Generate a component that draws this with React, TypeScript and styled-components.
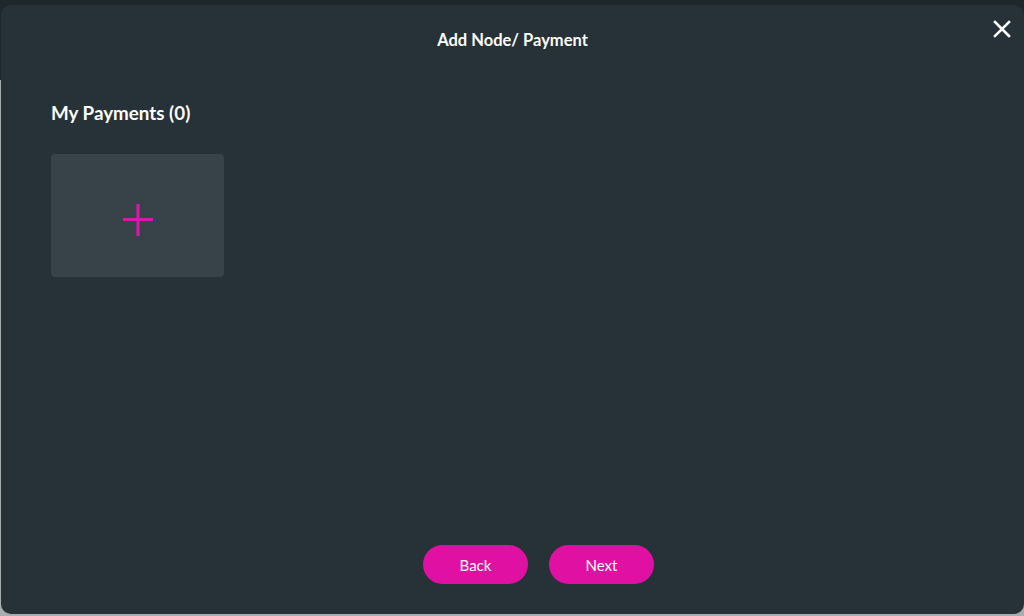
import React from "react";
import styled, { createGlobalStyle } from "styled-components";

const Global = createGlobalStyle`
  html, body { margin: 0; padding: 0; }
  body {
    width: 1024px;
    height: 616px;
    overflow: hidden;
    background: linear-gradient(to bottom, #1e272c 0, #1e272c 80px, #a9adb0 80px);
    font-family: Lato, "Open Sans", sans-serif;
  }
`;

const Modal = styled.div`
  position: relative;
  box-sizing: border-box;
  margin: 5px 0 0 1px;
  width: 1023px;
  height: 609px;
  background: #273238;
  border-radius: 10px;
  display: flex;
  flex-direction: column;
`;

const Header = styled.div`
  height: 70px;
  display: flex;
  align-items: center;
  justify-content: center;
`;

const Title = styled.h1`
  margin: 0;
  color: #ffffff;
  font-size: 16.5px;
  font-weight: 700;
  line-height: 20px;
`;

const Close = styled.button`
  position: absolute;
  top: 14px;
  right: 12px;
  width: 20px;
  height: 20px;
  padding: 0;
  border: 0;
  background: transparent;
  cursor: pointer;
  display: flex;
  align-items: center;
  justify-content: center;
`;

const Body = styled.div`
  flex: 1;
  padding: 26px 50px 0;
`;

const Heading = styled.h2`
  margin: 0;
  color: #ffffff;
  font-size: 18.8px;
  font-weight: 700;
  line-height: 24px;
`;

const AddCard = styled.button`
  margin-top: 29px;
  width: 173px;
  height: 123px;
  border: 0;
  border-radius: 4px;
  background: #374249;
  display: flex;
  align-items: center;
  justify-content: center;
  cursor: pointer;
  padding: 8px 0 0;
`;

const Footer = styled.div`
  display: flex;
  justify-content: center;
  gap: 21px;
  padding: 0 0 30px 52px;
`;

const PillButton = styled.button`
  width: 105px;
  height: 39px;
  border: 0;
  border-radius: 20px;
  background: #e010a2;
  color: #ffffff;
  font-family: Lato, "Open Sans", sans-serif;
  font-size: 15px;
  font-weight: 400;
  cursor: pointer;
`;

export default function App() {
  return (
    <>
      <Global />
      <Modal>
        <Header>
          <Title>Add Node/ Payment</Title>
        </Header>
        <Close aria-label="Close">
          <svg width="18" height="18" viewBox="0 0 18 18">
            <path d="M2 2 L16 16 M16 2 L2 16" stroke="#ffffff" strokeWidth="2.6" strokeLinecap="square" />
          </svg>
        </Close>
        <Body>
          <Heading>My Payments (0)</Heading>
          <AddCard aria-label="Add payment">
            <svg width="32" height="34" viewBox="0 0 32 34">
              <path d="M16 1 V33 M1 16.5 H31" stroke="#d41aa6" strokeWidth="3.2" />
            </svg>
          </AddCard>
        </Body>
        <Footer>
          <PillButton>Back</PillButton>
          <PillButton>Next</PillButton>
        </Footer>
      </Modal>
    </>
  );
}
